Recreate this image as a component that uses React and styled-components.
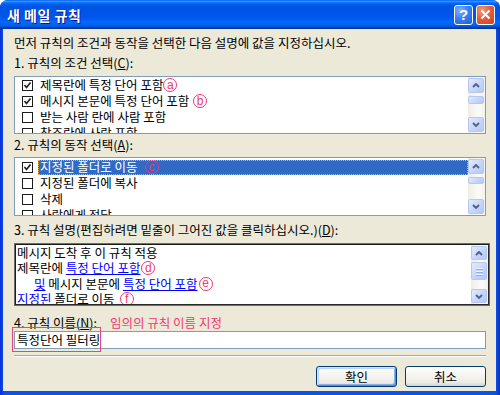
import React from 'react';
import styled, { createGlobalStyle, css } from 'styled-components';

const FONT = `"Noto Sans CJK KR", "Noto Sans", sans-serif`;
const PINK = '#EC3A74';

const Global = createGlobalStyle`
  html, body { margin: 0; padding: 0; background: #fff; }
  body { font-family: ${FONT}; }
  * { box-sizing: border-box; }
`;

const Window = styled.div`
  width: 500px;
  height: 395px;
  display: flex;
  flex-direction: column;
  background: linear-gradient(90deg, #0831D9 0%, #0A55E8 1%, #0A55E8 99%, #0832C0 100%);
  border-radius: 8px 8px 0 0;
  overflow: hidden;
`;

const TitleBar = styled.div`
  height: 29px;
  flex: none;
  display: flex;
  align-items: center;
  padding: 0 5px 0 7px;
  background: linear-gradient(180deg, #0058EE 0%, #3A93FF 4%, #288EFF 6%, #127DFF 8%, #036FFC 10%, #0262EE 14%, #0057E5 20%, #0054E3 24%, #0055EB 56%, #005BF5 66%, #026AFE 76%, #0062EF 86%, #0052D6 92%, #0040AB 96%, #003092 100%);
`;

const Title = styled.div`
  flex: 1;
  color: #fff;
  font-weight: bold;
  font-size: 14px;
  letter-spacing: 0.5px;
  text-shadow: 1px 1px 0 #0A1883;
`;

const CaptionButtons = styled.div`
  display: flex;
  gap: 3px;
`;

const CaptionButton = styled.div`
  width: 19px;
  height: 20px;
  border: 1px solid #fff;
  border-radius: 3px;
  display: flex;
  align-items: center;
  justify-content: center;
  color: #fff;
  font-family: "Liberation Sans", sans-serif;
  font-weight: bold;
  font-size: 15px;
  background: ${p => p.$close
    ? 'radial-gradient(circle at 30% 25%, #F19A7E 0%, #E3603C 45%, #C8421D 100%)'
    : 'radial-gradient(circle at 30% 25%, #7FB2FF 0%, #3C80F4 45%, #1F5AD8 100%)'};
`;

const Body = styled.div`
  flex: 1;
  margin: 0 4px 4px 3px;
  background: #ECE9D8;
  display: flex;
  flex-direction: column;
  padding: 7px 10px 0 11px;
  font-size: 12.5px;
  line-height: 14px;
  color: #000;
`;

const Text = styled.div`
  height: 14px;
  white-space: nowrap;
  margin-top: ${p => p.$mt || 0}px;
`;

const U = styled.span`
  text-decoration: underline;
`;

const ListBox = styled.div`
  height: ${p => p.$h}px;
  margin-top: ${p => p.$mt}px;
  flex: none;
  display: flex;
  background: #fff;
  border: 1px solid #7F9DB9;
  overflow: hidden;
  ${p => p.$sunken && css`
    border: 1px solid #6E6E6E;
    box-shadow: inset 1px 1px 0 #1A1A1A, inset -1px -1px 0 #2A2A2A;
    padding: 1px;
    margin-right: -4px;
  `}
`;

const Items = styled.div`
  flex: 1;
  min-width: 0;
  display: flex;
  flex-direction: column;
  overflow: hidden;
  padding-top: ${p => p.$pt || 0}px;
`;

const CheckRow = styled.div`
  height: 16px;
  flex: none;
  display: flex;
  align-items: center;
  padding-left: 7px;
`;

const Box = styled.div`
  width: 11px;
  height: 11px;
  flex: none;
  border: 1px solid #1C1C1C;
  background: #fff;
  display: flex;
  align-items: center;
  justify-content: center;
`;

const ItemText = styled.div`
  flex: 1;
  height: 15px;
  margin-left: 5px;
  padding-left: 2px;
  display: flex;
  align-items: center;
  white-space: nowrap;
  ${p => p.$selected && css`
    background: #316AC5;
    color: #fff;
    outline: 1px dotted #E8B450;
    outline-offset: -1px;
  `}
`;

const DescRow = styled.div`
  height: 15.5px;
  flex: none;
  display: flex;
  align-items: center;
  white-space: nowrap;
  padding-left: ${p => p.$indent ? 18 : 1}px;
`;

const Link = styled.span`
  color: #0000FF;
  text-decoration: underline;
`;

const Circle = styled.span`
  display: inline-flex;
  align-items: center;
  justify-content: center;
  width: 14px;
  height: 14px;
  flex: none;
  border: 1px solid ${PINK};
  border-radius: 50%;
  color: ${PINK};
  font-family: "Liberation Sans", sans-serif;
  font-size: 12px;
  line-height: 1;
  padding-bottom: 1px;
  margin-left: ${p => p.$gap || 0}px;
`;

const ScrollBar = styled.div`
  width: 17px;
  flex: none;
  display: flex;
  flex-direction: column;
  padding: 1px 1px 1px 0;
  background: linear-gradient(90deg, #EEEDE5 0%, #FBFBF8 60%, #F3F2EC 100%);
`;

const SBtn = styled.div`
  height: ${p => p.$h}px;
  flex: none;
  border: 1px solid #B5C8F3;
  border-radius: 2px;
  background: linear-gradient(135deg, #E3EBFE 0%, #C6D5FB 55%, #B4C8F6 100%);
  display: flex;
  flex-direction: column;
  align-items: center;
  justify-content: center;
  gap: 2px;
  margin-top: ${p => p.$top || 0}px;
`;

const Track = styled.div`
  flex: 1;
  display: flex;
  flex-direction: column;
`;

const Grip = styled.div`
  width: 7px;
  height: 1px;
  background: #EEF4FE;
  box-shadow: 0 1px 0 #8CB0F8;
`;

const NameRow = styled.div`
  display: flex;
  height: 14px;
  margin-top: 10px;
  white-space: nowrap;
`;

const Hint = styled.span`
  color: ${PINK};
  margin-left: 13px;
`;

const InputBox = styled.div`
  position: relative;
  height: 18px;
  margin-top: 1px;
  flex: none;
  border: 1px solid #7F9DB9;
  background: #fff;
  padding-left: 2px;
  display: flex;
  align-items: center;
  white-space: nowrap;
`;

const Marker = styled.div`
  position: absolute;
  left: -3px;
  top: -5px;
  width: 89px;
  height: 25px;
  border: 1px solid #E8467A;
  pointer-events: none;
`;

const Separator = styled.div`
  height: 2px;
  margin-top: 6px;
  flex: none;
  border-top: 1px solid #ACA899;
  border-bottom: 1px solid #fff;
`;

const ButtonRow = styled.div`
  display: flex;
  justify-content: flex-end;
  gap: 8px;
  margin-top: 9px;
`;

const Button = styled.div`
  width: 81px;
  height: 21px;
  border: 1px solid #003C74;
  border-radius: 3px;
  display: flex;
  align-items: center;
  justify-content: center;
  background: linear-gradient(180deg, #FFFFFF 0%, #F5F4F0 45%, #ECEBE5 80%, #D8D4CB 100%);
  ${p => p.$default && css`
    box-shadow: inset 1px 1px 0 #CEE7FF, inset -1px -1px 0 #6982EE, inset 2px 2px 0 #BCD4F6, inset -2px -2px 0 #89ADE4;
  `}
`;

const Chevron = ({ up }) => (
  <svg width="8" height="5" viewBox="0 0 8 5">
    <polyline
      points={up ? '1,4 4,1 7,4' : '1,1 4,4 7,1'}
      fill="none"
      stroke="#4D6185"
      strokeWidth="1.8"
    />
  </svg>
);

const Check = () => (
  <svg width="9" height="9" viewBox="0 0 9 9">
    <polyline points="1.5,4 3.5,6.5 7.5,1.5" fill="none" stroke="#1C1C1C" strokeWidth="1.6" />
  </svg>
);

const Scroll = ({ btn, thumbTop, thumbH, grip }) => (
  <ScrollBar>
    <SBtn $h={btn}><Chevron up /></SBtn>
    <Track>
      <SBtn $h={thumbH} $top={thumbTop}>
        {grip && (<><Grip /><Grip /><Grip /></>)}
      </SBtn>
    </Track>
    <SBtn $h={btn}><Chevron /></SBtn>
  </ScrollBar>
);

const Item = ({ checked, selected, children }) => (
  <CheckRow>
    <Box>{checked && <Check />}</Box>
    <ItemText $selected={selected}>{children}</ItemText>
  </CheckRow>
);

export default function App() {
  return (
    <>
      <Global />
      <Window>
        <TitleBar>
          <Title>새 메일 규칙</Title>
          <CaptionButtons>
            <CaptionButton>?</CaptionButton>
            <CaptionButton $close>
              <svg width="11" height="11" viewBox="0 0 11 11">
                <path d="M1.5 1.5 L9.5 9.5 M9.5 1.5 L1.5 9.5" stroke="#fff" strokeWidth="2" />
              </svg>
            </CaptionButton>
          </CaptionButtons>
        </TitleBar>
        <Body>
          <Text>먼저 규칙의 조건과 동작을 선택한 다음 설명에 값을 지정하십시오.</Text>
          <Text $mt={6}>1. 규칙의 조건 선택(<U>C</U>):</Text>
          <ListBox $h={58} $mt={6}>
            <Items>
              <Item checked>제목란에 특정 단어 포함<Circle>a</Circle></Item>
              <Item checked>메시지 본문에 특정 단어 포함<Circle $gap={4}>b</Circle></Item>
              <Item>받는 사람 란에 사람 포함</Item>
              <Item>참조란에 사람 포함</Item>
            </Items>
            <Scroll btn={15} thumbTop={3} thumbH={8} />
          </ListBox>
          <Text $mt={4}>2. 규칙의 동작 선택(<U>A</U>):</Text>
          <ListBox $h={59} $mt={5}>
            <Items $pt={1}>
              <Item checked selected>지정된 폴더로 이동<Circle $gap={7}>c</Circle></Item>
              <Item>지정된 폴더에 복사</Item>
              <Item>삭제</Item>
              <Item>사람에게 전달</Item>
            </Items>
            <Scroll btn={15} thumbTop={3} thumbH={7} />
          </ListBox>
          <Text $mt={7}>3. 규칙 설명(편집하려면 밑줄이 그어진 값을 클릭하십시오.)(<U>D</U>):</Text>
          <ListBox $h={63} $mt={6} $sunken>
            <Items>
              <DescRow>메시지 도착 후 이 규칙 적용</DescRow>
              <DescRow>제목란에&nbsp;<Link>특정 단어 포함</Link><Circle $gap={1}>d</Circle></DescRow>
              <DescRow $indent><Link>및</Link>&nbsp;메시지 본문에&nbsp;<Link>특정 단어 포함</Link><Circle $gap={1}>e</Circle></DescRow>
              <DescRow><Link>지정된</Link>&nbsp;폴더로 이동<Circle $gap={5}>f</Circle></DescRow>
            </Items>
            <Scroll btn={14} thumbTop={2} thumbH={18} grip />
          </ListBox>
          <NameRow>
            <span>4. 규칙 이름(<U>N</U>):</span>
            <Hint>임의의 규칙 이름 지정</Hint>
          </NameRow>
          <InputBox>
            특정단어 필터링
            <Marker />
          </InputBox>
          <Separator />
          <ButtonRow>
            <Button $default>확인</Button>
            <Button>취소</Button>
          </ButtonRow>
        </Body>
      </Window>
    </>
  );
}
